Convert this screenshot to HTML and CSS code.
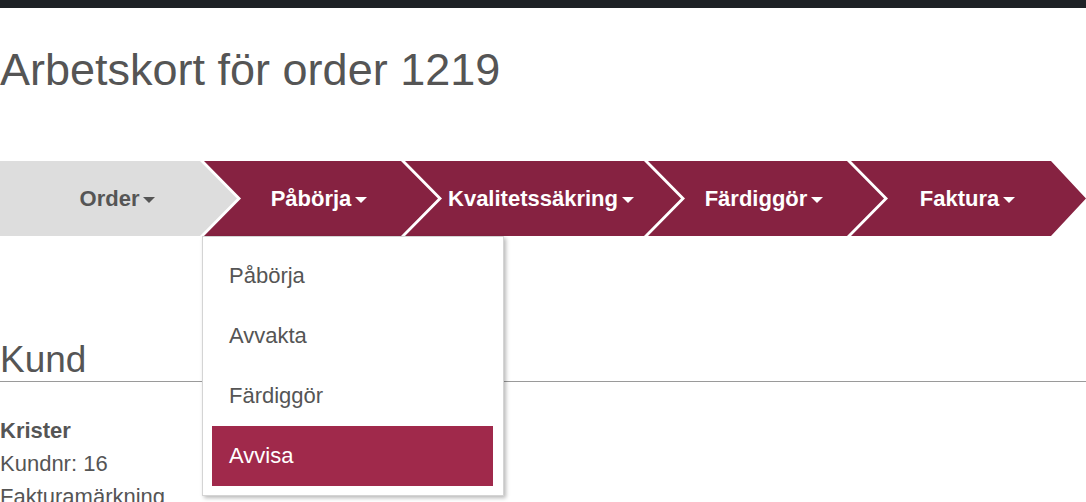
FILE: index.html
```html
<!DOCTYPE html>
<html lang="sv">
<head>
<meta charset="utf-8">
<title>Arbetskort för order 1219</title>
<link rel="stylesheet" href="styles.css">
</head>
<body>
<div class="topbar"></div>
<main class="page">
  <h1 class="title">Arbetskort för order 1219</h1>
  <nav class="steps-wrap">
    <div class="steps">
      <div class="step step-order"><span>Order<i class="caret"></i></span></div>
      <div class="step step-start"><span>Påbörja<i class="caret"></i></span></div>
      <div class="step step-qa"><span>Kvalitetssäkring<i class="caret"></i></span></div>
      <div class="step step-finish"><span>Färdiggör<i class="caret"></i></span></div>
      <div class="step step-invoice"><span>Faktura<i class="caret"></i></span></div>
    </div>
    <ul class="menu">
      <li class="menu-item">Påbörja</li>
      <li class="menu-item">Avvakta</li>
      <li class="menu-item">Färdiggör</li>
      <li class="menu-item active">Avvisa</li>
    </ul>
  </nav>
  <section class="customer">
    <h2 class="section-title">Kund</h2>
    <div class="customer-info">
      <div class="name">Krister</div>
      <div>Kundnr: 16</div>
      <div>Fakturamärkning</div>
    </div>
  </section>
</main>
</body>
</html>
```

FILE: styles.css
```css
html, body {
  margin: 0;
  padding: 0;
  background: #fff;
}
body {
  font-family: "Liberation Sans", Arial, sans-serif;
  color: #555;
  overflow: hidden;
  height: 502px;
}
.topbar {
  height: 8px;
  background: #1e2226;
}
.title {
  margin: 37px 0 0;
  font-size: 45px;
  line-height: 50px;
  font-weight: normal;
  color: #555;
}
.steps-wrap {
  position: relative;
  margin-top: 66px;
}
.steps {
  display: flex;
  height: 75px;
}
.step {
  flex: none;
  height: 75px;
  display: flex;
  align-items: center;
  justify-content: center;
  box-sizing: border-box;
  padding-right: 8px;
  margin-right: -37px;
  background: #862241;
  color: #fff;
  font-weight: bold;
  font-size: 22px;
  white-space: nowrap;
}
.caret {
  display: inline-block;
  width: 0;
  height: 0;
  margin-left: 4px;
  border-left: 6px solid transparent;
  border-right: 6px solid transparent;
  border-top: 6px solid currentColor;
  vertical-align: 3px;
}
.step-order {
  width: 241px;
  padding-right: 6px;
  background: #dddddd;
  color: #555;
  clip-path: polygon(0 0, 200px 0, 237px 50%, 200px 100%, 0 100%);
}
.step-start {
  width: 238px;
  clip-path: polygon(0 0, 197px 0, 234px 50%, 197px 100%, 0 100%, 37px 50%);
}
.step-qa {
  width: 280px;
  clip-path: polygon(0 0, 239px 0, 276px 50%, 239px 100%, 0 100%, 37px 50%);
}
.step-finish {
  width: 240px;
  clip-path: polygon(0 0, 199px 0, 236px 50%, 199px 100%, 0 100%, 37px 50%);
}
.step-invoice {
  width: 235px;
  margin-right: 0;
  padding-right: 2px;
  clip-path: polygon(0 0, 200px 0, 235px 50%, 200px 100%, 0 100%, 37px 50%);
}
.menu {
  position: absolute;
  left: 202px;
  top: 75px;
  width: 281px;
  margin: 0;
  padding: 9px 10px 9px 9px;
  list-style: none;
  background: #fff;
  border: 1px solid #d4d4d4;
  box-shadow: 2px 2px 4px rgba(0, 0, 0, 0.28);
  z-index: 2;
}
.menu-item {
  height: 60px;
  line-height: 60px;
  padding-left: 17px;
  font-size: 22px;
  color: #555;
}
.menu-item.active {
  background: #a0294b;
  color: #fff;
}
.section-title {
  margin: 104px 0 0;
  font-size: 37px;
  line-height: 40px;
  font-weight: normal;
  color: #555;
  padding-bottom: 1px;
  border-bottom: 1px solid #9a9a9a;
}
.customer-info {
  margin-top: 32px;
  font-size: 22px;
  line-height: 33px;
}
.name {
  font-weight: bold;
}
```
